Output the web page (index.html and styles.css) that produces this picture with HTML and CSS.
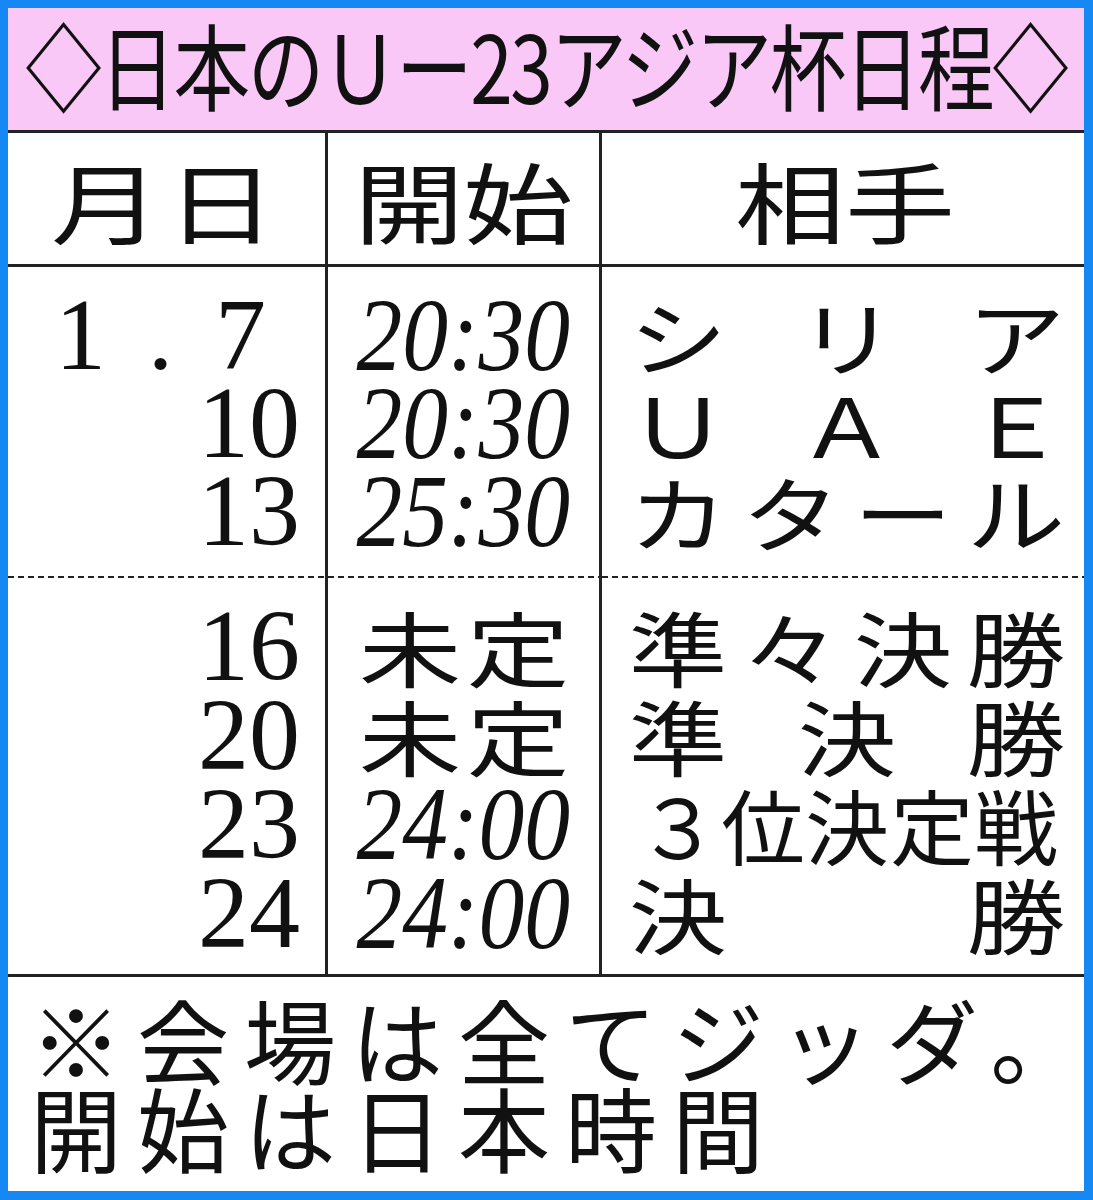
FILE: index.html
```html
<!DOCTYPE html>
<html lang="ja">
<head>
<meta charset="utf-8">
<title>日本のU-23アジア杯日程</title>
<link rel="stylesheet" href="styles.css">
</head>
<body>
<div class="frame">
  <div class="title"><span class="title-text">◇日本のＵー23アジア杯日程◇</span></div>
  <div class="table">
    <div class="cell c1 head"><div class="hd hd1"><span class="w">月</span><span class="w">日</span></div></div>
    <div class="cell c2 head"><div class="hd hd2"><span class="w">開</span><span class="w">始</span></div></div>
    <div class="cell c3 head"><div class="hd hd3"><span class="w">相</span><span class="w">手</span></div></div>

    <div class="cell c1 g1">
      <div class="num first"><span>1</span><span>.</span><span>7</span></div>
      <div class="num">10</div>
      <div class="num">13</div>
    </div>
    <div class="cell c2 g1">
      <div class="time"><span>20:30</span></div>
      <div class="time"><span>20:30</span></div>
      <div class="time"><span>25:30</span></div>
    </div>
    <div class="cell c3 g1">
      <div class="opp"><span>シ</span><span>リ</span><span>ア</span></div>
      <div class="opp"><span>Ｕ</span><span>Ａ</span><span>Ｅ</span></div>
      <div class="opp"><span>カ</span><span>タ</span><span>ー</span><span>ル</span></div>
    </div>

    <div class="cell c1 g2">
      <div class="num">16</div>
      <div class="num">20</div>
      <div class="num">23</div>
      <div class="num">24</div>
    </div>
    <div class="cell c2 g2">
      <div class="kj"><span>未</span><span>定</span></div>
      <div class="kj"><span>未</span><span>定</span></div>
      <div class="time"><span>24:00</span></div>
      <div class="time"><span>24:00</span></div>
    </div>
    <div class="cell c3 g2">
      <div class="opp"><span>準</span><span>々</span><span>決</span><span>勝</span></div>
      <div class="opp"><span>準</span><span>決</span><span>勝</span></div>
      <div class="opp narrow"><span>３</span><span>位</span><span>決</span><span>定</span><span>戦</span></div>
      <div class="opp"><span>決</span><span>勝</span></div>
    </div>
  </div>
  <div class="note">
    <div class="note-line">※会場は全てジッダ。</div>
    <div class="note-line">開始は日本時間</div>
  </div>
</div>
</body>
</html>
```

FILE: styles.css
```css
* {
  box-sizing: border-box;
  margin: 0;
  padding: 0;
}

html, body {
  width: 1093px;
  height: 1200px;
  background: #ffffff;
  overflow: hidden;
}

body {
  font-family: "Noto Sans CJK JP", "Noto Sans", sans-serif;
  color: #111111;
}

.frame {
  width: 1093px;
  height: 1200px;
  border-style: solid;
  border-color: #1688f3;
  border-width: 8px 9px 9px 8px;
  display: flex;
  flex-direction: column;
  background: #ffffff;
}

/* title band */
.title {
  flex: none;
  height: 125px;
  background: #f9c8f6;
  border-bottom: 3px solid #222222;
  display: flex;
  align-items: center;
  justify-content: center;
  padding-bottom: 12px;
}

.title-text {
  display: inline-block;
  font-size: 94px;
  line-height: 1;
  letter-spacing: -3px;
  white-space: nowrap;
  transform: scaleX(0.815);
}

/* table */
.table {
  flex: none;
  display: grid;
  grid-template-columns: 320px 274px 1fr;
  grid-template-rows: 134px 311px 399px;
}

.cell {
  overflow: hidden;
}

.c1,
.c2 {
  border-right: 3px solid #222222;
}

.head {
  border-bottom: 3px solid #222222;
  display: flex;
  align-items: center;
  justify-content: center;
}

.hd {
  display: flex;
  font-size: 88px;
  line-height: 1;
}

.hd .w {
  display: block;
  width: 88px;
  text-align: center;
  transform: scaleX(1.25);
}

.hd1 {
  gap: 27px;
  padding-right: 6px;
}

.hd2 {
  gap: 21px;
}

.hd3 {
  gap: 22px;
  padding-left: 4px;
}

.g1 {
  padding-top: 24px;
  background-image: repeating-linear-gradient(to right, #222222 0 6px, transparent 6px 10px);
  background-size: 100% 2px;
  background-position: left bottom;
  background-repeat: no-repeat;
}

.g2 {
  padding-top: 23px;
  border-bottom: 3px solid #222222;
}

/* day column */
.num {
  font-family: "Liberation Serif", serif;
  font-size: 102px;
  line-height: 88px;
  text-align: right;
  padding-right: 25px;
  white-space: nowrap;
}

.g2 .num {
  line-height: 89px;
}

.num.first {
  display: flex;
  justify-content: space-between;
  width: 211px;
  margin-left: 47px;
  padding-right: 0;
}

/* start time column */
.time {
  font-family: "Liberation Serif", serif;
  font-style: italic;
  font-size: 104px;
  line-height: 88px;
  text-align: center;
  white-space: nowrap;
}

.g2 .time {
  line-height: 89px;
}

.time span {
  display: inline-block;
  transform: scaleX(0.88);
}

.kj {
  display: flex;
  justify-content: center;
  gap: 26px;
  font-size: 82px;
  line-height: 89px;
}

.kj span {
  display: block;
  width: 82px;
  text-align: center;
  transform: scaleX(1.25);
}

/* opponent column */
.opp {
  display: flex;
  justify-content: space-between;
  padding: 0 27px 0 35px;
  font-size: 82px;
  line-height: 88px;
}

.g2 .opp {
  line-height: 89px;
}

.opp span {
  display: block;
  width: 82px;
  text-align: center;
  transform: scaleX(1.2);
}

.opp.narrow span {
  transform: scaleX(1.02);
}

/* footnote */
.note {
  flex: 1;
  padding: 17px 0 0 22px;
  font-size: 92px;
  line-height: 88px;
  letter-spacing: 15px;
  white-space: nowrap;
}

.note-line {
  width: max-content;
}
```
